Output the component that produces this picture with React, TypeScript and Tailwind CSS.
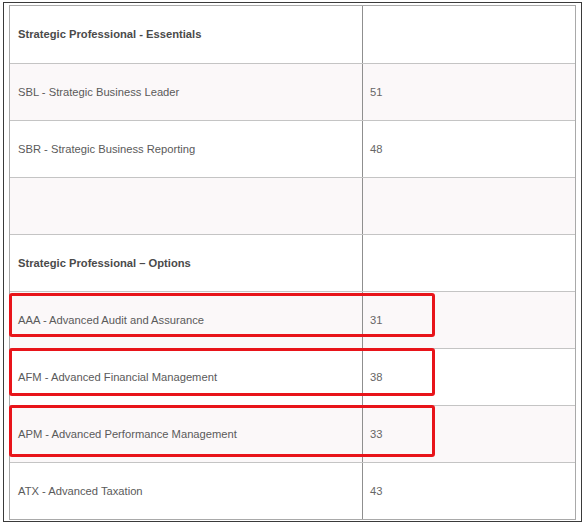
import React from 'react';

type Row = { name: string; score: string; bold?: boolean };

const rows: Row[] = [
  { name: 'Strategic Professional - Essentials', score: '', bold: true },
  { name: 'SBL - Strategic Business Leader', score: '51' },
  { name: 'SBR - Strategic Business Reporting', score: '48' },
  { name: '', score: '' },
  { name: 'Strategic Professional \u2013 Options', score: '', bold: true },
  { name: 'AAA - Advanced Audit and Assurance', score: '31' },
  { name: 'AFM - Advanced Financial Management', score: '38' },
  { name: 'APM - Advanced Performance Management', score: '33' },
  { name: 'ATX - Advanced Taxation', score: '43' },
];

// red highlight boxes drawn over the table
const marks = [
  { top: 290, height: 44 },
  { top: 345, height: 48 },
  { top: 402, height: 52 },
];

const App: React.FC = () => {
  return (
    <div className="w-[586px] h-[526px] bg-white pt-[2px] pl-[3px] font-['Liberation_Sans',Arial,sans-serif]">
      <div className="relative w-[579px] h-[520px] border border-[#3a3a3a] pt-[2px] pl-[5px]">
        <div className="w-[567px] border border-[#a9a9a9] bg-white">
          {rows.map((row, i) => (
            <div
              key={i}
              className={`grid grid-cols-[352px_1fr] h-[57px] ${i > 0 ? 'border-t border-[#c4c4c4]' : ''} ${i % 2 === 1 ? 'bg-[#fbf8f9]' : 'bg-white'}`}
            >
              <div
                className={`flex items-center pl-[8px] text-[11.2px] ${row.bold ? 'font-bold text-[#4a4a4a]' : 'text-[#5a5a5a]'}`}
              >
                {row.name}
              </div>
              <div className="flex items-center pl-[7px] border-l border-[#8f8f8f] text-[11.2px] text-[#666]">
                {row.score}
              </div>
            </div>
          ))}
        </div>
        {marks.map((m, i) => (
          <div
            key={i}
            className="absolute left-[5px] w-[426px] border-[3px] border-[#e8141a] rounded-[3px]"
            style={{ top: m.top, height: m.height }}
          />
        ))}
      </div>
    </div>
  );
};

export default App;
